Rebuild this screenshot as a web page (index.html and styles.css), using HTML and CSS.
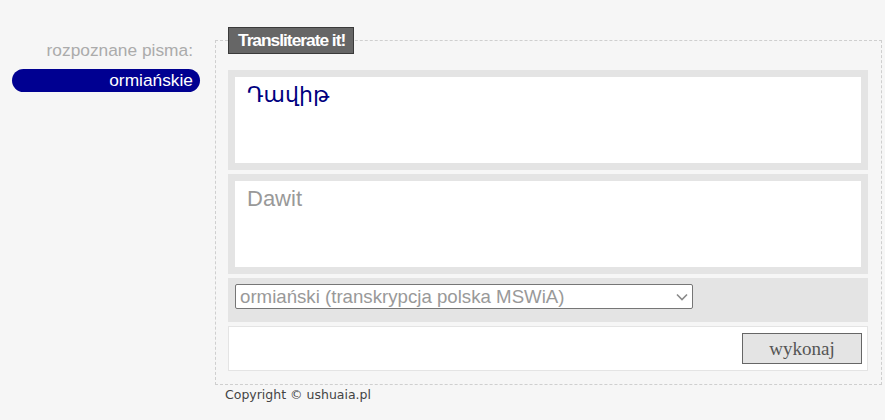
FILE: index.html
```html
<!DOCTYPE html>
<html lang="pl">
<head>
    <meta charset="UTF-8">
    <meta name="viewport" content="width=device-width, initial-scale=1.0">
    <title>Transliteracja</title>
    <link rel="stylesheet" href="styles.css">
</head>
<body>
    <div class="page">
        <div class="sidebar">
            <div class="sidebar-label">rozpoznane pisma:</div>
            <div class="script-pill">ormiańskie</div>
        </div>

        <div class="main">
            <fieldset class="translit">
                <legend>Transliterate it!</legend>
                <textarea class="box box-source" readonly>Դավիթ</textarea>
                <textarea class="box box-result" readonly>Dawit</textarea>
                <div class="select-row">
                    <span class="select-wrap">
                        <select class="scheme">
                            <option>ormiański (transkrypcja polska MSWiA)</option>
                        </select>
                        <svg class="chevron" width="12" height="8" viewBox="0 0 12 8">
                            <path d="M1 1.5 L6 6.5 L11 1.5" fill="none" stroke="#8a8a8a" stroke-width="1.6"/>
                        </svg>
                    </span>
                </div>
                <div class="button-row">
                    <button type="button" class="run">wykonaj</button>
                </div>
            </fieldset>
            <div class="copyright">Copyright © ushuaia.pl</div>
        </div>
    </div>
</body>
</html>
```

FILE: styles.css
```css
body {
    margin: 0;
    background-color: #f6f6f6;
    font-family: "Liberation Sans", Arial, sans-serif;
}
.page {
    display: flex;
    align-items: flex-start;
}
.sidebar {
    width: 188px;
    margin-left: 12px;
    padding-top: 40px;
    text-align: right;
    font-size: 17.33px;
}
.sidebar-label {
    line-height: 20px;
    color: #ababab;
    padding-right: 7px;
    margin-bottom: 9px;
}
.script-pill {
    line-height: 23px;
    padding: 0 7px;
    border-radius: 12px;
    background-color: #000091;
    color: #fff;
}
.main {
    flex: 1;
    margin-left: 15px;
    margin-right: 3px;
    margin-top: 27px;
}
.translit {
    margin: 0;
    min-width: 0;
    border: 1px dashed #cfcfcf;
    padding: 16px 13px 13px 12px;
    display: flex;
    flex-direction: column;
    gap: 4px;
}
.translit legend {
    padding: 3px 8px 3px 9px;
    margin: 0;
    background-color: #666;
    border: 1px solid #3a3a3a;
    color: #fff;
    font-weight: bold;
    font-size: 17.33px;
    line-height: 19px;
    letter-spacing: -1px;
}
.box {
    display: block;
    box-sizing: border-box;
    width: 100%;
    height: 100px;
    margin: 0;
    padding: 5px 12px;
    border: 7px solid #e4e4e4;
    background-color: #fff;
    font-family: "Liberation Sans", "DejaVu Sans", Arial, sans-serif;
    font-size: 22px;
    resize: none;
    outline: none;
    overflow: hidden;
}
.box-source {
    color: #000080;
}
.box-result {
    color: #999;
}
.select-row {
    background-color: #e4e4e4;
    padding: 6px 7px;
    height: 44px;
    box-sizing: border-box;
}
.select-wrap {
    position: relative;
    display: inline-block;
}
.scheme {
    display: block;
    width: 458px;
    height: 25px;
    border: 1px solid #767676;
    border-radius: 2px;
    background-color: #fff;
    color: #999;
    font-family: "Liberation Sans", Arial, sans-serif;
    font-size: 18.67px;
    padding: 0 2px 0 4px;
    appearance: none;
    -webkit-appearance: none;
}
.chevron {
    position: absolute;
    right: 5px;
    top: 9px;
    pointer-events: none;
}
.button-row {
    background-color: #fff;
    border: 1px solid #e4e4e4;
    height: 45px;
    box-sizing: border-box;
    display: flex;
    justify-content: flex-end;
    align-items: flex-start;
    padding: 6px 5px 0 0;
}
.run {
    width: 120px;
    height: 31px;
    border: 1px solid #666;
    background-color: #e4e4e4;
    color: #555;
    font-family: "Liberation Serif", "Times New Roman", serif;
    font-size: 19px;
    padding: 0;
}
.copyright {
    margin: 2px 0 0 10px;
    font-family: "DejaVu Sans", Verdana, sans-serif;
    font-size: 12.5px;
    color: #444;
}
```
